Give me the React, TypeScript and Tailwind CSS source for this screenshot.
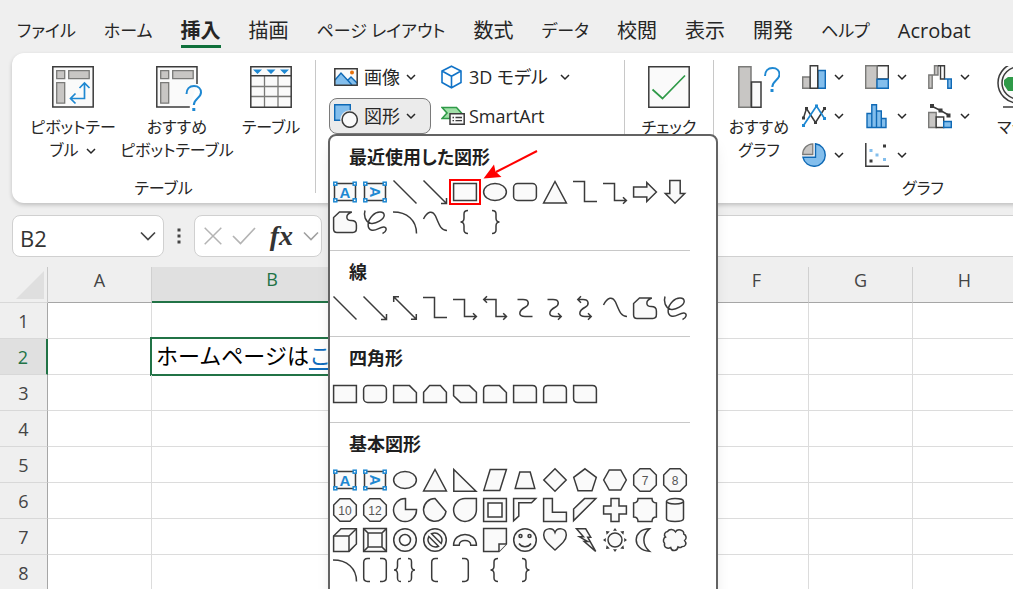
import React from "react";

type Kids = { children?: React.ReactNode };

const UI_FONT = "font-['Open_Sans','Noto_Sans_CJK_JP',sans-serif]";

function Chevron({ className = "text-[#262626]" }: { className?: string }) {
  return (
    <svg className={`shrink-0 ${className}`} width="10" height="10" viewBox="0 0 10 10" fill="none" stroke="currentColor" strokeWidth="1.5">
      <path d="M1 3l4 4 4-4" />
    </svg>
  );
}

/* ---------- shape gallery drawings (24 x 24) ---------- */

function Corner({ x, y }: { x: number; y: number }) {
  return <rect x={x} y={y} width="3" height="3" fill="#fff" stroke="#1e88d2" strokeWidth="1.5" />;
}

function TextFrame({ turned }: { turned?: boolean }) {
  return (
    <>
      <path d="M1.5 3.5h21v17h-21z" />
      <text
        x="12"
        y="17.5"
        textAnchor="middle"
        fontSize="15"
        fontWeight="700"
        fontFamily="Liberation Sans, sans-serif"
        fill="#1e88d2"
        stroke="none"
        transform={turned ? "rotate(90 12 12)" : undefined}
      >
        A
      </text>
      <Corner x={0.8} y={2.2} />
      <Corner x={20.2} y={2.2} />
      <Corner x={0.8} y={18.8} />
      <Corner x={20.2} y={18.8} />
    </>
  );
}

function NumberedOctagon({ n }: { n: string }) {
  return (
    <>
      <path d="M7 .7h10L23.3 7v10L17 23.3H7L.7 17V7z" />
      <text x="12" y="16.5" textAnchor="middle" fontSize="12" fontFamily="Liberation Sans, sans-serif" fill="#555" stroke="none">
        {n}
      </text>
    </>
  );
}

const line = (d: string) => <path d={d} fill="none" />;

const shapes: Record<string, React.ReactNode> = {
  "テキスト ボックス": <TextFrame />,
  "縦書きテキスト ボックス": <TextFrame turned />,
  直線: line("M.5 .5L23.5 23.5"),
  矢印: line("M.5 .5L23.5 23.5M23.5 18v5.5H18"),
  両方向矢印: line("M.7 .7L23.3 23.3M23.3 18v5.3H18M.7 6V.7H6"),
  四角形: <path d="M.6 3.6h22.8v16.8H.6z" />,
  楕円: <ellipse cx="12" cy="12" rx="11.4" ry="8.5" />,
  角丸四角形: <rect x=".6" y="3.6" width="22.8" height="16.8" rx="4" />,
  三角形: <path d="M12 1.5L23.4 23H.6z" />,
  カギ線: line("M0 1.5h11.5v20H24"),
  カギ線矢印: line("M0 3.5h11.5v17h12M20 17.2l3.4 3.3-3.4 3.3"),
  カギ線両矢印: line("M.7 3.5h12.3v17h10.4M20.2 17.2l3.3 3.3-3.3 3.3M4 .2L.7 3.5 4 6.8"),
  曲線コネクタ: line("M4.5 3.5H10c6.500 0 6.500 5 2.500 7.500C5 15 5 20.500 12 20.500h7.500"),
  曲線矢印: line("M4.500 3.500H10c6.500 0 6.500 5 2.500 7.500C5 15 5 20.500 12 20.500h6M15 17.300l3.200 3.200-3.200 3.200"),
  曲線両矢印: line("M5 3.500h5c6 0 6.500 5 2.500 7.500C5 15 5 20.500 12 20.500h6M15 17.300l3.200 3.200-3.200 3.200M8 .3L4.800 3.500 8 6.700"),
  右矢印: <path d="M.6 7h13.200V2.500L23.400 12l-9.600 9.500V17H.6z" />,
  下矢印: <path d="M6.800 .6h10.400v13h4.500L12 23.300 2.300 13.600h4.500z" />,
  フリーフォーム: <path d="M.6 19V7.500L6.500 2h12.300c-7 2.500-6 8.500-.5 8.500 4 0 5.100 1.500 5.100 4.500v3.500c0 2.800-1 3.900-3.500 3.900H4c-2.400 0-3.400-1-3.400-3.400z" />,
  スケッチ: line("M2 .5C.5 5 2 11.500 7.500 13.200 13 14.500 21 9 21.200 5.500 21.200 1 14 .8 9.500 5.500 4 11 3.500 19 9 20.200c4.500 1 8-3.700 12-3.200 3.500.5 2.500 5-1.500 6.500"),
  円弧: line("M0 2c14 0 23.500 8 23.500 21.500"),
  曲線: line("M.5 9C4.500 1 9.500 0 12.500 6c3.500 8 5 14.500 11.500 14.500"),
  左中かっこ: line("M15 .6c-3 0-4 .8-4 3.400V8c0 2.500-1 4-3.500 4 2.500 0 3.500 1.500 3.500 4v4c0 2.600 1 3.400 4 3.400"),
  右中かっこ: line("M9 .6c3 0 4 .8 4 3.400V8c0 2.500 1 4 3.500 4-2.500 0-3.500 1.500-3.500 4v4c0 2.600-1 3.400-4 3.400"),
  一つの角を切り取った四角形: <path d="M.6 3.600h15.900l6.900 6.900v9.900H.6z" />,
  上の二つの角を切り取った四角形: <path d="M6.600 3.600h10.800l6 6.600v10.200H.6V10.200z" />,
  対角を切り取った四角形: <path d="M.6 3.600h15.900l6.900 6.600v10.200H7.500L.6 13.800z" />,
  角を丸め切り取った四角形: <path d="M4.600 3.600h11.900l6.900 6.900v9.900H.6V7.600q0-4 4-4z" />,
  一つの角を丸めた四角形: <path d="M.6 3.600h18.800q4 0 4 4v12.800H.6z" />,
  上の二つの角を丸めた四角形: <path d="M4.600 3.600h14.800q4 0 4 4v12.800H.6V7.600q0-4 4-4z" />,
  対角を丸めた四角形: <path d="M.6 3.600h18.800q4 0 4 4v12.800H4.600q-4 0-4-4z" />,
  直角三角形: <path d="M.8 1.500v21.800H23z" />,
  平行四辺形: <path d="M7.200 1.600h16.200L16.800 22.400H.8z" />,
  台形: <path d="M6.800 4h10.400l4.600 16.400H2.200z" />,
  ひし形: <path d="M12 .8L23.200 12 12 23.200.8 12z" />,
  五角形: <path d="M12 .8l11.300 8.600L19 22.800H5L.7 9.400z" />,
  六角形: <path d="M6.300 2h11.400l5.600 10-5.600 10H6.300L.7 12z" />,
  七角形: <NumberedOctagon n="7" />,
  八角形: <NumberedOctagon n="8" />,
  十角形: <NumberedOctagon n="10" />,
  十二角形: <NumberedOctagon n="12" />,
  部分円: <path d="M12.500 .6v11h11A11.500 11.500 0 1 1 12.500 .6z" />,
  弦: <path d="M12 .6L23 13.500A11.300 11.300 0 1 1 12 .6z" />,
  涙形: <path d="M12 .6h11.400V12A11.400 11.400 0 1 1 12 .6z" />,
  フレーム: <><path d="M.6 .6h22.800v22.800H.6z" /><path d="M5 5h14v14H5z" fill="#fff" /></>,
  半フレーム: <path d="M.6 .6h22.200l-4.300 4.200H5.800v13.300L.6 22.800z" />,
  L字: <path d="M.6 .6h8.800v13.600h14v9.200H.6z" />,
  斜め縞: <path d="M11.500 .6h11.300L.6 22.600V11z" />,
  十字形: <path d="M8 .6h8V8h7.400v8H16v7.400H8V16H.6V8H8z" />,
  ブローチ: <path d="M5 .6h14c0 3 1.400 4.400 4.400 4.400v14c-3 0-4.400 1.400-4.400 4.400H5c0-3-1.400-4.400-4.400-4.400V5C3.600 5 5 3.600 5 .6z" />,
  円柱: <><path d="M3.500 3.500v17c0 4 17 4 17 0v-17" /><ellipse cx="12" cy="3.300" rx="8.500" ry="2.700" /></>,
  立方体: <><path d="M.6 8L8 .8h15.400V16L16 23.400H.6z" /><path d="M.6 8H16v15.400M16 8L23.400 .8" fill="none" /></>,
  額縁: <><path d="M.6 .6h22.800v22.800H.6z" /><path d="M5 5h14v14H5zM.6 .6L5 5M23.400 .6L19 5M.6 23.400L5 19M23.400 23.400L19 19" /></>,
  ドーナツ: <><circle cx="12" cy="12" r="11.300" /><circle cx="12" cy="12" r="5.500" fill="#fff" /></>,
  禁止: <><circle cx="12" cy="12" r="11.300" /><path d="M8.500 5.800A7.300 7.300 0 0 1 18.200 15.500zM5.800 8.500A7.300 7.300 0 0 0 15.500 18.200z" fill="#fff" /></>,
  アーチ: <path d="M.6 17.300C.6 2.800 23.400 2.800 23.400 17.300h-5.600c0-6.500-11.600-6.500-11.600 0z" />,
  メモ: <><path d="M.6 .6h22.800v15.400L16 23.400H.6z" /><path d="M16 23.400V16h7.400" /></>,
  スマイル: <><circle cx="12" cy="12" r="11.300" /><circle cx="7.500" cy="8" r="1.500" /><circle cx="16.500" cy="8" r="1.500" /><path d="M6 15.500c2.800 4.300 9.200 4.300 12 0" fill="none" /></>,
  ハート: <path d="M12 22C6 16.500.7 12.500.7 7 .7-.5 10-1 12 4.500 14-1 23.300-.5 23.300 7c0 5.500-5.300 9.500-11.300 15z" />,
  稲妻: <path d="M3.500 .8h9.200l5 8.400h-3l8 14.200-11.500-9.800h3.500L6.500 8.800h4z" />,
  太陽: (
    <>
      <circle cx="12" cy="12" r="7" />
      <path d="M12 0l2 2.800h-4zM12 24l2-2.800h-4zM0 12l2.800-2v4zM24 12l-2.800-2v4zM3 3l3.800.6-3.200 3.200zM21 3l-.6 3.800-3.200-3.200zM3 21l.6-3.800 3.200 3.200zM21 21l-3.800-.6 3.200-3.200z" fill="#3b3b3b" stroke="none" />
    </>
  ),
  月: <path d="M16.500 .8C-1 1 -1.500 22 16.500 23.300 9 17 9 7 16.500 .8z" />,
  雲: <path d="M4.500 3.500c2-3 6-2.500 8 .3 2-3.300 8.500-2.300 8.300 2.200 2.700 1.500 3.200 4.500.8 6.500 2.400 3 1.200 6.300-2.800 6.300-1.300 1-2.500 1-3.800.2-.8 4.500-6.500 4.800-7.300.5-3 1.500-7 .2-6.200-4.200C-.3 13.500.3 10 2.500 9 .5 7 1.500 4 4.500 3.500z" />,
  大かっこ: line("M7 .6H4.500Q.7.6.7 4.500v15q0 3.900 3.800 3.900H7M17 .6h2.500q3.800 0 3.800 3.900v15q0 3.900-3.800 3.900H17"),
  中かっこ: line("M8 .6C5 .6 4.500 1.500 4.500 4v4c0 2.500-1 4-3.500 4 2.500 0 3.500 1.500 3.500 4v4c0 2.500.5 3.400 3.500 3.400M15 .6c3 0 3.500.9 3.500 3.400v4c0 2.500 1 4 3.500 4-2.500 0-3.500 1.500-3.500 4v4c0 2.500-.5 3.400-3.500 3.400"),
  左大かっこ: line("M15 .6h-2.500Q8.700.6 8.700 4.500v15q0 3.900 3.800 3.900H15"),
  右大かっこ: line("M9 .6h2.500q3.800 0 3.800 3.900v15q0 3.900-3.800 3.900H9"),
};

const sections: { title: string; items: string[] }[] = [
  {
    title: "最近使用した図形",
    items: ["テキスト ボックス", "縦書きテキスト ボックス", "直線", "矢印", "四角形", "楕円", "角丸四角形", "三角形", "カギ線", "カギ線矢印", "右矢印", "下矢印", "フリーフォーム", "スケッチ", "円弧", "曲線", "左中かっこ", "右中かっこ"],
  },
  {
    title: "線",
    items: ["直線", "矢印", "両方向矢印", "カギ線", "カギ線矢印", "カギ線両矢印", "曲線コネクタ", "曲線矢印", "曲線両矢印", "曲線", "フリーフォーム", "スケッチ"],
  },
  {
    title: "四角形",
    items: ["四角形", "角丸四角形", "一つの角を切り取った四角形", "上の二つの角を切り取った四角形", "対角を切り取った四角形", "角を丸め切り取った四角形", "一つの角を丸めた四角形", "上の二つの角を丸めた四角形", "対角を丸めた四角形"],
  },
  {
    title: "基本図形",
    items: ["テキスト ボックス", "縦書きテキスト ボックス", "楕円", "三角形", "直角三角形", "平行四辺形", "台形", "ひし形", "五角形", "六角形", "七角形", "八角形", "十角形", "十二角形", "部分円", "弦", "涙形", "フレーム", "半フレーム", "L字", "斜め縞", "十字形", "ブローチ", "円柱", "立方体", "額縁", "ドーナツ", "禁止", "アーチ", "メモ", "スマイル", "ハート", "稲妻", "太陽", "月", "雲", "円弧", "大かっこ", "中かっこ", "左大かっこ", "右大かっこ", "左中かっこ", "右中かっこ"],
  },
];

function ShapeMenu() {
  return (
    <div className="absolute top-full -left-px z-20 h-[560px] w-[390px] rounded-lg border-2 border-[#636363] bg-white shadow-lg">
      {sections.map((s, si) => (
        <section key={s.title} className="w-[360px] border-t border-[#c8c8c8] pb-[13px] first:border-t-0">
          <h3 className={`h-[42px] pl-[19px] text-lg leading-[42px] font-bold text-[#1f1f1f] ${si === 0 ? "-mb-px" : ""}`}>{s.title}</h3>
          <div className="grid grid-cols-12">
            {s.items.map((name, i) => (
              <button key={i} type="button" aria-label={name} className="relative flex h-[30px] items-center justify-center">
                <svg width="24" height="24" viewBox="0 0 24 24" fill="#fafafa" stroke="#3b3b3b" strokeWidth="1.5" className="overflow-visible">
                  {shapes[name]}
                </svg>
                {si === 0 && name === "四角形" && (
                  <>
                    <span className="absolute -inset-x-px inset-y-[2px] border-2 border-[#f00]" />
                    <svg className="absolute bottom-full left-full z-10 overflow-visible" width="60" height="30" viewBox="0 0 60 30">
                      <path d="M57 4L16 25" stroke="#f00" strokeWidth="2" />
                      <path d="M3.500 31.500L14 17.500 15.500 24.500 21.500 30z" fill="#f00" />
                    </svg>
                  </>
                )}
              </button>
            ))}
          </div>
        </section>
      ))}
    </div>
  );
}

/* ---------- ribbon drawings ---------- */

function PivotFrame({ cut, children }: Kids & { cut?: boolean }) {
  return (
    <svg width="42" height="46" viewBox="0 0 42 46" fill="none" className="-mb-1 overflow-visible">
      <path d={cut ? "M41 18V.8H.8V41h33" : "M.8 .8h40.400V41H.8z"} fill="#fafafa" stroke="#3b3b3b" strokeWidth="1.5" />
      <path d="M4.700 4.700h8v8h-8zM16.700 4.700h20.500v8H16.700zM4.700 16.700h8v20.500h-8z" fill="#c8c6c4" stroke="#7a7a78" strokeWidth="1.300" />
      {children}
    </svg>
  );
}

const questionMark = "M0 8C0 3 3 0 7.500 0S14.500 3 14.500 6.500c0 5.500-7.200 6-7.200 12.500";

function Blue({ d }: { d: string }) {
  return <path d={d} fill="#83beec" stroke="#0f69b5" strokeWidth="1.400" />;
}
function Grey({ d }: { d: string }) {
  return <path d={d} fill="#c8c6c4" stroke="#7a7a78" strokeWidth="1.400" />;
}
function Dark({ d }: { d: string }) {
  return <path d={d} fill="#fafafa" stroke="#3b3b3b" strokeWidth="1.400" />;
}

const chartIcons: [string, React.ReactNode][] = [
  ["縦棒グラフ", <><Grey d="M.7 12h7.500v11.300H.7z" /><Blue d="M16 5.500h7.300v17.800H16z" /><Dark d="M8.200 .7h7.500v22.600H8.200z" /></>],
  ["階層構造グラフ", <><Dark d="M12 .7h11.300V14H12z" /><Grey d="M.7 .7H12v22.600H.7z" /><Blue d="M12 14.200h11.300v9.100H12z" /></>],
  ["ウォーターフォール図", <><Grey d="M.8 10h3.400v13.300H.8zM6.500 .7H10V10H6.500zM4.200 10h2.300" /><Dark d="M12.500 .7h4v13.300h-4zM10 .7h2.500" /><Blue d="M19.800 14h3.500v9.300h-3.500zM16.500 14h3.300" /></>],
  ["折れ線グラフ", <><path d="M1.500 14L4.500 4.500l9 14 9-14" fill="none" stroke="#3b3b3b" strokeWidth="1.500" /><path d="M1.500 21.500L14.500 2l8 12.500" fill="none" stroke="#1e88d2" strokeWidth="1.700" /><path d="M0 12.500h3v3H0zM3 3h3v3H3zM12 17h3v3h-3zM21 3h3v3h-3z" fill="#3b3b3b" /><path d="M0 20h3v3H0zM13 .5h3v3h-3zM21 13h3v3h-3z" fill="#1e88d2" /></>],
  ["統計グラフ", <Blue d="M2 9.500h4.800v14H2zM6.800 .7h4.700v22.800H6.800zM11.500 7h4.800v16.500h-4.800zM16.300 14.500H21v9h-4.700z" />],
  ["複合グラフ", <><Grey d="M.7 8.500h7.500v15H.7z" /><Dark d="M8.200 13h7.500v10.500H8.200z" /><Blue d="M15.700 17.500h7.600v6h-7.600z" /><path d="M3.500 2l9 4.500 8 4.500" stroke="#3b3b3b" strokeWidth="1.500" fill="none" /><path d="M2 0h4v4H2zM10.500 4.500h4v4h-4zM18.500 9.500h4v4h-4z" fill="#3b3b3b" /></>],
  ["円グラフ", <><path d="M10.800 .8V11.500H.7C.7 5.500 5 1 10.800 .8z" fill="#c8c6c4" stroke="#7a7a78" strokeWidth="1.300" /><Blue d="M13.500 .8A11.300 11.300 0 1 1 .9 14.200h12.600z" /></>],
  ["散布図", <><path d="M.8 0v23.200H24" fill="none" stroke="#3b3b3b" strokeWidth="1.500" /><path d="M18 1.500h3v3h-3zM4.500 16.500h3v3h-3z" fill="#3b3b3b" /><path d="M4.500 6h3v3h-3zM10.500 10.500h3v3h-3zM18 15h3v3h-3z" fill="#83beec" /></>],
];

function BigButton({ icon, lines, chevron, className }: { icon: React.ReactNode; lines: string[]; chevron?: boolean; className: string }) {
  return (
    <button type="button" className={`flex shrink-0 flex-col items-center pt-[13px] ${className}`}>
      {icon}
      <span className="mt-2 block text-base leading-[23px] whitespace-nowrap">
        {lines.map((l, i) => (
          <span key={l} className="flex items-center justify-center gap-2">
            {l}
            {chevron && i === lines.length - 1 && <Chevron />}
          </span>
        ))}
      </span>
    </button>
  );
}

function Divider() {
  return <div className="mt-[7px] mb-[10px] w-px shrink-0 bg-[#c8c8c8]" />;
}

function GroupLabel({ children }: Kids) {
  return <div className="mt-auto mb-[3px] text-center text-base leading-6">{children}</div>;
}

function Ribbon() {
  return (
    <div className="relative z-10 ml-3 flex h-[150px] w-max min-w-full rounded-xl bg-white shadow-[0_2px_4px_rgba(0,0,0,0.2)]">
      <div className="flex w-[303px] shrink-0 flex-col">
        <div className="flex pl-[17px]">
          <BigButton
            className="w-[88px]"
            lines={["ピボットテー", "ブル"]}
            chevron
            icon={
              <PivotFrame>
                <path d="M32.500 17.500v15H19M27.500 22l5-5 5 5M23.500 27.500l-5 5 5 5" stroke="#1e88d2" strokeWidth="1.700" />
              </PivotFrame>
            }
          />
          <BigButton
            className="w-[120px]"
            lines={["おすすめ", "ピボットテーブル"]}
            icon={
              <PivotFrame cut>
                <path d={questionMark} transform="translate(30.500 20)" stroke="#1e88d2" strokeWidth="2" />
                <path d="M36.300 42h3v3h-3z" fill="#1e88d2" />
              </PivotFrame>
            }
          />
          <BigButton
            className="w-[68px]"
            lines={["テーブル"]}
            icon={
              <svg width="42" height="42" viewBox="0 0 42 42" fill="none">
                <path d="M.8 .8h40.400v40.400H.8z" fill="#fafafa" />
                <path d="M1 20.500h40M1 30.500h40M14.500 10v31M28 10v31" stroke="#7a7a78" strokeWidth="1.300" />
                <path d="M.8 .8h40.400v40.400H.8zM.8 9.800h40.400" stroke="#3b3b3b" strokeWidth="1.500" />
                <path d="M3 3.500h9L7.500 8zM16.500 3.500h9L21 8zM30 3.500h9L34.500 8z" fill="#1e88d2" />
              </svg>
            }
          />
        </div>
        <GroupLabel>テーブル</GroupLabel>
      </div>
      <Divider />
      <div className="flex w-[308px] shrink-0 gap-[6px] pt-[6px] pl-[13px] text-lg">
        <div className="flex w-[102px] flex-col gap-[3px]">
          <button type="button" className="flex h-9 items-center gap-[6px] px-[5px]">
            <svg width="24" height="18" viewBox="0 0 24 18">
              <path d="M.8 .8h22.400v16.400H.8z" fill="#fafafa" />
              <path d="M1 12L7 5l6.500 7L17 9l6 5v3H1z" fill="#83beec" />
              <path d="M1 12L7 5l11 12M13.500 12.500L17 9l6 6" fill="none" stroke="#0f69b5" strokeWidth="1.400" />
              <circle cx="18" cy="4.500" r="2" fill="#e8710a" />
              <path d="M.8 .8h22.400v16.400H.8z" fill="none" stroke="#3b3b3b" strokeWidth="1.500" />
            </svg>
            画像
            <Chevron />
          </button>
          <div className="relative">
            <button type="button" aria-expanded="true" className="flex h-9 w-full items-center gap-[6px] rounded-lg border border-[#7a7a7a] bg-[#ebebeb] px-1">
              <svg width="24" height="24" viewBox="0 0 24 24" className="shrink-0">
                <path d="M.7 .7h15.600v15.600H.7z" fill="#83beec" stroke="#0f69b5" strokeWidth="1.400" />
                <circle cx="15.700" cy="15.700" r="9.500" fill="#ebebeb" />
                <circle cx="15.700" cy="15.700" r="7.600" fill="#fafafa" stroke="#3b3b3b" strokeWidth="1.500" />
              </svg>
              図形
              <Chevron />
            </button>
            <ShapeMenu />
          </div>
        </div>
        <div className="flex flex-col gap-[3px]">
          <button type="button" className="flex h-9 items-center gap-1 px-1 whitespace-nowrap">
            <svg width="24" height="24" viewBox="0 0 24 24" fill="none" stroke="#1173c7" strokeWidth="1.600">
              <path d="M10.500 1.200L20 6v11.500l-9.500 5.300L1 17.500V6zM1.500 6.300l9 5 9-5M10.500 11.300v11" />
            </svg>
            3D モデル
            <span className="ml-2 flex">
              <Chevron />
            </span>
          </button>
          <button type="button" className="flex h-9 items-center gap-1 px-1">
            <svg width="24" height="20" viewBox="0 0 24 20">
              <path d="M1 1.500h14.500L20.500 7v4H9v1.500H1L6 7z" fill="#a1dfa8" stroke="#2f9a48" strokeWidth="1.600" />
              <path d="M9 7.800h14.200v10.500H9z" fill="#fafafa" stroke="#3b3b3b" strokeWidth="1.500" />
              <path d="M11.500 11.500h1.500M14.500 11.500H21M11.500 14.700h1.500M14.500 14.700H21" stroke="#3b3b3b" strokeWidth="1.300" />
            </svg>
            SmartArt
          </button>
        </div>
      </div>
      <Divider />
      <BigButton
        className="w-[88px]"
        lines={["チェック", "ボックス"]}
        icon={
          <svg width="42" height="42" viewBox="0 0 42 42" fill="none">
            <path d="M.8 .8h40.400v40.400H.8z" fill="#fafafa" stroke="#3b3b3b" strokeWidth="1.500" />
            <path d="M4.500 23.500l10 9L37 9.500" stroke="#2f9a48" strokeWidth="1.700" />
          </svg>
        }
      />
      <Divider />
      <div className="flex w-[418px] shrink-0 flex-col">
        <div className="flex pl-[5px]">
          <BigButton
            className="w-20"
            lines={["おすすめ", "グラフ"]}
            icon={
              <svg width="42" height="42" viewBox="0 0 42 42" fill="none">
                <path d="M.8 .8H13v40.400H.8z" fill="#c8c6c4" stroke="#7a7a78" strokeWidth="1.500" />
                <path d="M13.500 16H23v25.200h-9.500z" fill="#fafafa" stroke="#3b3b3b" strokeWidth="1.500" />
                <path d={questionMark} transform="translate(27 2)" stroke="#1e88d2" strokeWidth="2" />
                <path d="M32.500 23h3v3h-3z" fill="#1e88d2" />
              </svg>
            }
          />
          <div className="grid auto-rows-[39px] grid-cols-[63px_63px_63px] content-start pt-1">
            {chartIcons.map(([name, art]) => (
              <button key={name} type="button" aria-label={name} className="flex items-center gap-2 px-[3px]">
                <svg width="24" height="24" viewBox="0 0 24 24" className="overflow-visible">
                  {art}
                </svg>
                <Chevron />
              </button>
            ))}
          </div>
          <BigButton
            className="w-[78px]"
            lines={["マップ"]}
            chevron
            icon={
              <svg width="60" height="42" viewBox="0 0 60 42" fill="none">
                <circle cx="21" cy="17" r="20" fill="#fafafa" stroke="#3b3b3b" strokeWidth="1.500" />
                <circle cx="21" cy="17" r="16" fill="#fafafa" stroke="#3b3b3b" strokeWidth="1.500" />
                <path d="M7 14l4-3h8v8l-3 2v4h-5l-4-6z" fill="#2f9a48" />
                <path d="M6 41h30" stroke="#3b3b3b" strokeWidth="1.500" />
              </svg>
            }
          />
        </div>
        <GroupLabel>グラフ</GroupLabel>
      </div>
    </div>
  );
}

/* ---------- tabs, formula bar, sheet ---------- */

const tabs = ["ファイル", "ホーム", "挿入", "描画", "ページ レイアウト", "数式", "データ", "校閲", "表示", "開発", "ヘルプ", "Acrobat"];
const hasKana = (t: string) => /[\u3040-\u30ff]/.test(t);

function Tabs() {
  return (
    <nav className="flex h-[53px] gap-7 pt-[17px] pl-[17px]">
      {tabs.map((t) => (
        <button
          key={t}
          type="button"
          className={`h-[31px] shrink-0 border-b-[3px] leading-7 whitespace-nowrap ${hasKana(t) ? "text-[17px]" : "text-xl"} ${
            t === "挿入" ? "border-[#0f703b] font-bold" : "border-transparent"
          }`}
        >
          {t}
        </button>
      ))}
    </nav>
  );
}

function FormulaBar() {
  return (
    <div className="mt-3 flex h-[42px] pl-3">
      <div className="flex w-[152px] shrink-0 items-center rounded-lg border border-[#d0d0d0] bg-white px-[7px]">
        <input aria-label="名前ボックス" defaultValue="B2" className="min-w-0 flex-1 bg-transparent pt-1 text-[22px] text-[#333] outline-none" />
        <svg width="16" height="10" viewBox="0 0 16 10" fill="none" stroke="#444" strokeWidth="1.700">
          <path d="M1 1.500l7 7 7-7" />
        </svg>
      </div>
      <svg className="mx-[13px] shrink-0 self-center" width="4" height="18" viewBox="0 0 4 18" fill="#444">
        <path d="M.5 1.500h3v3h-3zM.5 7.500h3v3h-3zM.5 13.500h3v3h-3z" />
      </svg>
      <div className="flex w-[128px] shrink-0 items-center justify-between rounded-lg border border-[#d0d0d0] bg-white pr-[2px] pl-[9px]">
        <button type="button" aria-label="キャンセル">
          <svg width="18" height="18" viewBox="0 0 18 18" fill="none" stroke="#b4b4b4" strokeWidth="1.500">
            <path d="M.7 .7l16.600 16.600M17.300 .7L.7 17.300" />
          </svg>
        </button>
        <button type="button" aria-label="入力">
          <svg width="24" height="18" viewBox="0 0 24 18" fill="none" stroke="#b4b4b4" strokeWidth="1.700">
            <path d="M1 9l7.500 7.500L23 1" />
          </svg>
        </button>
        <button type="button" className="pl-1 font-['Liberation_Serif',serif] text-[28px] leading-8 font-bold text-[#333] italic">
          fx
        </button>
        <svg width="16" height="10" viewBox="0 0 16 10" fill="none" stroke="#a0a0a0" strokeWidth="1.600">
          <path d="M1 1.500l7 7 7-7" />
        </svg>
      </div>
      <input aria-label="数式バー" className="ml-[7px] min-w-0 flex-1 rounded-l-lg border border-r-0 border-[#d0d0d0] bg-white px-2 outline-none" />
    </div>
  );
}

const columns = ["A", "B", "C", "D", "E", "F", "G", "H"];
const rows = [1, 2, 3, 4, 5, 6, 7, 8];

function Sheet() {
  return (
    <table className="mt-[10px] w-[1017px] table-fixed border-separate border-spacing-0 bg-white">
      <colgroup>
        <col className="w-12" />
        {columns.map((c) => (
          <col key={c} className={c === "B" ? "w-[241px]" : "w-[104px]"} />
        ))}
      </colgroup>
      <thead>
        <tr className="h-9">
          <td className="border-r border-b border-r-[#c8c8c8] border-b-[#d8d8d8] bg-[#efefef] p-0">
            <svg className="ml-4" width="28" height="28" viewBox="0 0 28 28">
              <path d="M28 0v28H0z" fill="#dfdfdf" />
            </svg>
          </td>
          {columns.map((c) => (
            <th
              key={c}
              scope="col"
              className={`border-r p-0 pb-[10px] text-lg leading-6 font-normal ${
                c === "B" ? "border-r-[#c8c8c8] border-b-2 border-b-[#217346] bg-[#e0e0e0] text-[#217346]" : "border-b border-r-[#d0d0d0] border-b-[#a6a6a6] bg-[#efefef] text-[#444]"
              }`}
            >
              {c}
            </th>
          ))}
        </tr>
      </thead>
      <tbody>
        {rows.map((r) => (
          <tr key={r} className="h-9">
            <th
              scope="row"
              className={`border-b border-b-[#d8d8d8] p-0 text-lg leading-6 font-normal ${
                r === 2 ? "border-r-2 border-r-[#217346] bg-[#e0e0e0] text-[#217346]" : "border-r border-r-[#a6a6a6] bg-[#efefef] text-[#444]"
              }`}
            >
              {r}
            </th>
            {columns.map((c) => (
              <td key={c} className="relative border-r border-b border-[#dcdcdc] p-0">
                {r === 2 && c === "B" && (
                  <>
                    <span className="block overflow-hidden pb-1 pl-1 text-[22px] leading-7 whitespace-nowrap text-black [font-feature-settings:normal]">
                      ホームページは
                      <a href="#link" className="text-[#0f6cbd] underline underline-offset-4">
                        こ
                      </a>
                    </span>
                    <span className="pointer-events-none absolute -inset-0.5 border-2 border-[#217346]" />
                  </>
                )}
              </td>
            ))}
          </tr>
        ))}
      </tbody>
    </table>
  );
}

export default function App() {
  return (
    <div lang="ja" className={`h-screen overflow-hidden bg-[#efefef] text-[#262626] [font-feature-settings:'palt'] ${UI_FONT}`}>
      <Tabs />
      <Ribbon />
      <FormulaBar />
      <Sheet />
    </div>
  );
}
